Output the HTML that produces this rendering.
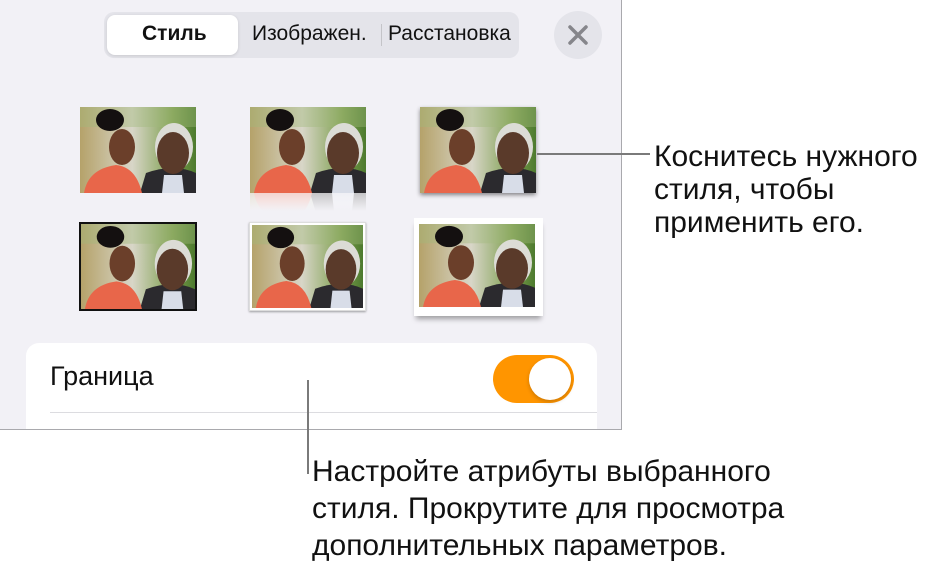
<!DOCTYPE html>
<html><head><meta charset="utf-8"><style>
body{margin:0;width:934px;height:569px;background:#fff;position:relative;overflow:hidden;font-family:"Liberation Sans",sans-serif}
.panel{position:absolute;left:0;top:0;width:621px;height:429px;background:#f2f1f6;border-right:1px solid #a9a9ad;border-bottom:1px solid #a9a9ad;overflow:hidden}
.seg{position:absolute;left:104px;top:12px;width:415px;height:46px;background:#e4e4ea;border-radius:10px}
.sel{position:absolute;left:3px;top:3px;width:131px;height:40px;background:#fff;border-radius:8px;box-shadow:0 1px 3px rgba(0,0,0,.12)}
.seg span{position:absolute;top:10px;font-size:21px;color:#111;white-space:nowrap}
.close{position:absolute;left:554px;top:11px;width:48px;height:48px;border-radius:50%;background:#e4e4ea}
.ph{position:absolute}
.card{position:absolute;left:26px;top:343px;width:571px;height:120px;background:#fff;border-radius:13px}
.tg{position:absolute;left:467px;top:12px;width:81px;height:48px;border-radius:24px;background:#ff9500}
.tg i{position:absolute;right:3px;top:3px;width:42px;height:42px;border-radius:50%;background:#fff;box-shadow:0 2px 4px rgba(0,0,0,.2)}
.t{position:absolute;font-size:30px;color:#111;white-space:nowrap}
</style></head><body>
<svg width="0" height="0" style="position:absolute"><defs>
<linearGradient id="bg" x1="0" x2="1"><stop offset="0" stop-color="#b5a26a"/><stop offset=".45" stop-color="#d8d6c8"/><stop offset=".8" stop-color="#7fa050"/><stop offset="1" stop-color="#4d7a2e"/></linearGradient>
<symbol id="p" viewBox="0 0 116 86" preserveAspectRatio="none">
<rect width="116" height="86" fill="url(#bg)"/>
<rect x="0" y="0" width="116" height="20" fill="#9fb87a" opacity=".4"/>
<ellipse cx="94" cy="40" rx="19" ry="24" fill="#dcdcd6"/>
<path d="M60 86 L66 66 Q94 56 116 66 L116 86Z" fill="#2b2a2e"/>
<path d="M82 86 L84 68 L102 68 L104 86Z" fill="#d8dde8"/>
<ellipse cx="93" cy="46" rx="16" ry="21" fill="#5a3a2a"/>
<ellipse cx="30" cy="13" rx="14" ry="11" fill="#141010"/>
<ellipse cx="42" cy="40" rx="13" ry="18" fill="#6b3f2a"/>
<path d="M4 86 Q8 62 36 58 Q56 60 62 86Z" fill="#e8664a"/>
</symbol>
<linearGradient id="rf" x1="0" y1="0" x2="0" y2="1"><stop offset="0" stop-color="#fff" stop-opacity=".3"/><stop offset="1" stop-color="#f2f1f6" stop-opacity="1"/></linearGradient>
</defs></svg>
<div class="panel">
 <div class="seg"><div class="sel"></div>
  <span style="left:38px;font-weight:bold">Стиль</span>
  <span style="left:148px">Изображен.</span>
  <div style="position:absolute;left:277px;top:12px;width:1px;height:22px;background:#c4c4c8"></div>
  <span style="left:284px">Расстановка</span></div>
 <div class="close"><svg width="48" height="48"><path d="M16 16L32 32M32 16L16 32" stroke="#86868b" stroke-width="3.5" stroke-linecap="round"/></svg></div>

 <svg class="ph" style="left:80px;top:107px" width="116" height="86"><use href="#p"/></svg>
 <svg class="ph" style="left:250px;top:107px" width="116" height="104"><use href="#p" width="116" height="86"/><g transform="translate(0,172) scale(1,-1)" opacity=".35"><use href="#p" width="116" height="86"/></g><rect y="86" width="116" height="18" fill="url(#rf)"/></svg>
 <svg class="ph" style="left:420px;top:107px;filter:drop-shadow(0 2px 2px rgba(0,0,0,.45))" width="116" height="86"><use href="#p"/></svg>
 <svg class="ph" style="left:79px;top:222px;border:2px solid #111" width="114" height="85"><use href="#p" width="114" height="85"/></svg>
 <div class="ph" style="left:249px;top:222px;width:115px;height:87px;border:1px solid #ddd;background:#fff;box-shadow:0 1px 2px rgba(0,0,0,.35)"><svg style="position:absolute;left:2px;top:2px" width="111" height="83"><use href="#p" width="111" height="83"/></svg></div>
 <div class="ph" style="left:414px;top:218px;width:129px;height:98px;background:#fff;box-shadow:0 5px 5px -2px rgba(0,0,0,.35)"><svg style="position:absolute;left:5px;top:6px" width="116" height="83"><use href="#p" width="116" height="83"/></svg></div>

 <div class="card">
  <div style="position:absolute;left:24px;top:18px;font-size:27px;color:#111">Граница</div>
  <div class="tg"><i></i></div>
  <div style="position:absolute;left:24px;top:69px;right:0;height:1px;background:#dcdce0"></div>
 </div>
</div>
<div style="position:absolute;left:537px;top:153px;width:113px;height:2px;background:#7a7a7a"></div>
<div style="position:absolute;left:307px;top:380px;width:2px;height:94px;background:#7a7a7a"></div>
<div class="t" style="left:654px;top:140px;line-height:33px">Коснитесь нужного<br>стиля, чтобы<br>применить его.</div>
<div class="t" style="left:312px;top:453px;line-height:37px">Настройте атрибуты выбранного<br>стиля. Прокрутите для просмотра<br>дополнительных параметров.</div>
</body></html>
